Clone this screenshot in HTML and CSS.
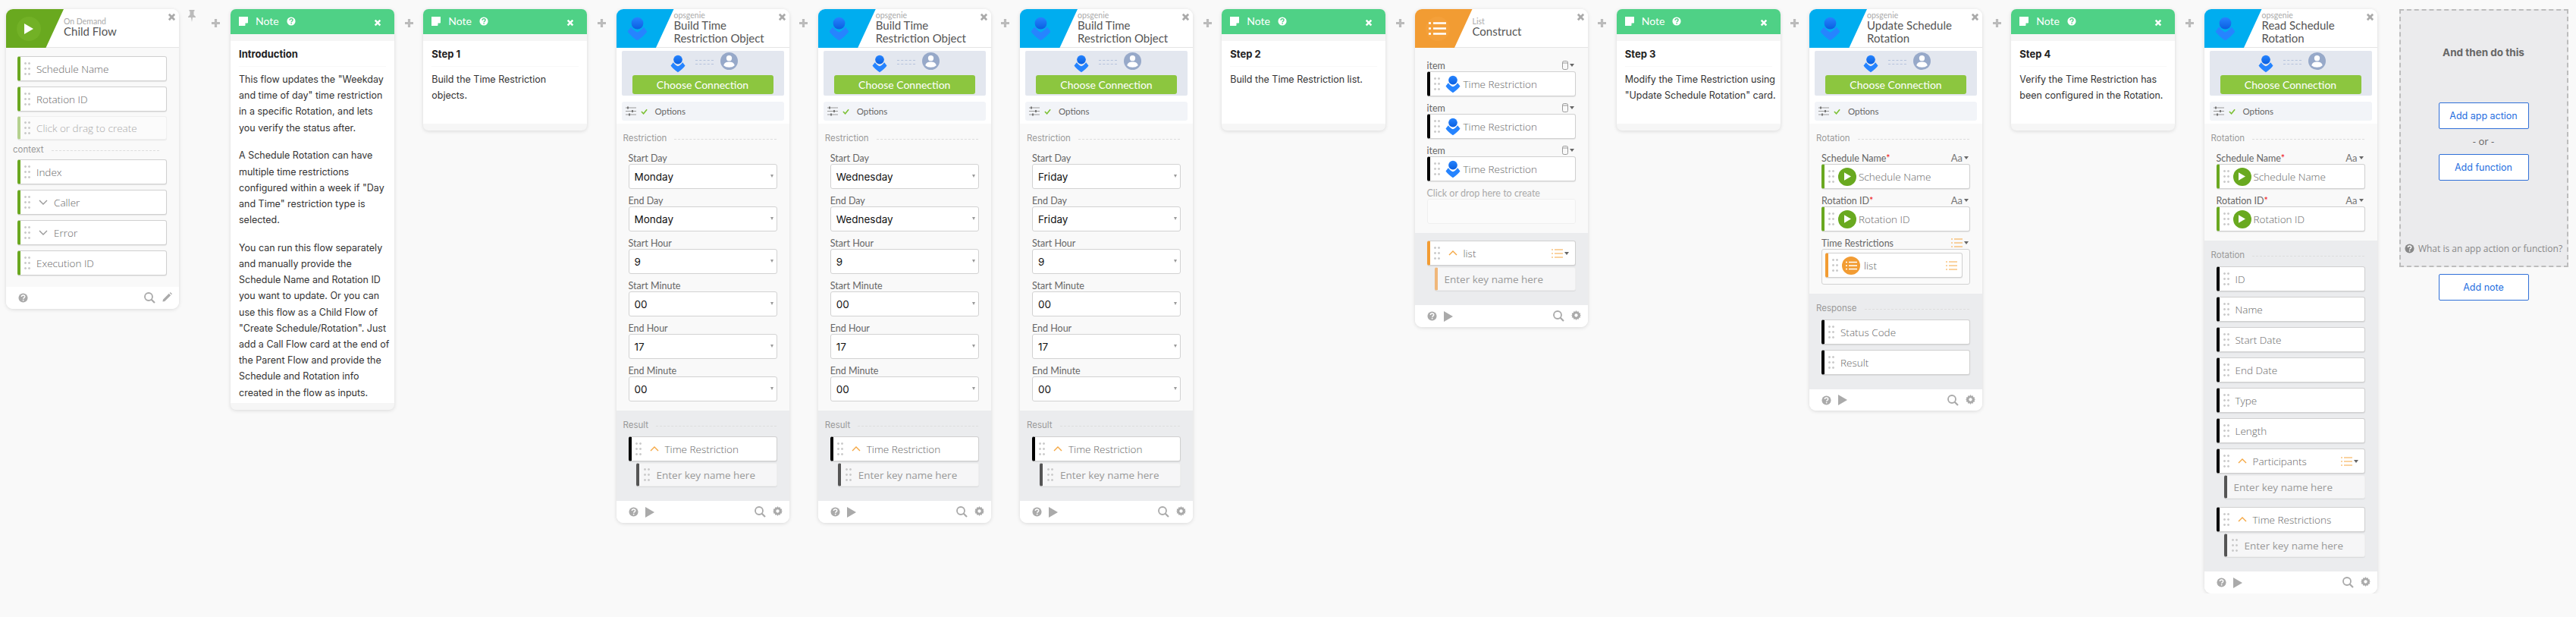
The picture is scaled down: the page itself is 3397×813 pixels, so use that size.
FILE: index.html
```html
<!DOCTYPE html>
<html lang="en">
<head>
    <meta charset="UTF-8">
    <title>Child Flow</title>
    <link rel="stylesheet" href="styles.css">
</head>
<body>

    <!-- shared icons -->
    <svg class="defs" aria-hidden="true">
        <defs>
            <linearGradient id="ogBlue" x1="0" y1="0" x2="0" y2="1">
                <stop offset="0" stop-color="#2684ff"/>
                <stop offset="1" stop-color="#0a5fe0"/>
            </linearGradient>
            <symbol id="i-og" viewBox="0 0 24 28">
                <circle cx="12" cy="7.5" r="7" fill="url(#ogBlue)"/>
                <path d="M12 18c-3-1.400-5.600-3.600-7.400-6.200L.6 17c2.200 3.400 7 7.800 11.400 10.500C16.400 24.800 21.200 20.400 23.400 17l-4-5.200C17.600 14.400 15 16.600 12 18z" fill="#2684ff"/>
            </symbol>
            <symbol id="i-user" viewBox="0 0 24 24">
                <circle cx="12" cy="12" r="12" fill="#97a9c9"/>
                <circle cx="12" cy="8" r="3.800" fill="#fff"/>
                <path d="M4.500 18c.6-3.600 3.600-5 7.500-5s6.900 1.400 7.500 5c-1.800 1.800-4.600 2.600-7.500 2.600s-5.700-.8-7.500-2.600z" fill="#fff"/>
            </symbol>
            <symbol id="i-close" viewBox="0 0 12 12">
                <path d="M2 2l8 8M10 2l-8 8" stroke="currentColor" stroke-width="3" fill="none"/>
            </symbol>
            <symbol id="i-help" viewBox="0 0 14 14">
                <circle cx="7" cy="7" r="6.500" fill="currentColor"/>
                <path d="M4.700 5.400c0-1.400 1-2.200 2.400-2.200s2.300.8 2.300 2c0 1.700-2.200 1.600-2.200 3.200" stroke="#fff" stroke-width="1.600" fill="none"/>
                <rect x="6.300" y="9.500" width="1.700" height="1.700" fill="#fff"/>
            </symbol>
            <symbol id="i-help-dark" viewBox="0 0 14 14">
                <circle cx="7" cy="7" r="6.500" fill="#fff"/>
                <path d="M4.700 5.400c0-1.400 1-2.200 2.400-2.200s2.300.8 2.300 2c0 1.700-2.200 1.600-2.200 3.200" stroke="#4fd186" stroke-width="1.600" fill="none"/>
                <rect x="6.300" y="9.500" width="1.700" height="1.700" fill="#4fd186"/>
            </symbol>
            <symbol id="i-note" viewBox="0 0 12 12">
                <path d="M0 0h12v8l-4 4H0z" fill="#fff"/>
                <path d="M8.500 12V8.500H12" fill="#4fd186"/>
            </symbol>
            <symbol id="i-search" viewBox="0 0 15 15">
                <circle cx="6" cy="6" r="5" fill="none" stroke="currentColor" stroke-width="1.800"/>
                <path d="M9.500 9.500L14 14" stroke="currentColor" stroke-width="2.200"/>
            </symbol>
            <symbol id="i-gear" viewBox="0 0 14 14">
                <path d="M7 0l1.200 2 2.200-.7.500 2.200 2.300.5-.7 2.200L14 7l-1.500.8.700 2.200-2.300.5-.5 2.200-2.200-.7L7 14l-1.200-2-2.200.7-.5-2.200-2.300-.5.700-2.200L0 7l1.500-.8-.7-2.200 2.300-.5.500-2.200 2.200.7z" fill="currentColor"/>
                <circle cx="7" cy="7" r="2.300" fill="#fff"/>
            </symbol>
            <symbol id="i-pencil" viewBox="0 0 14 14">
                <path d="M1 10.500L9.500 2l2.500 2.500L3.500 13 .5 13.500zM10.500 1l1-1 2.500 2.500-1 1z" fill="currentColor"/>
            </symbol>
            <symbol id="i-list" viewBox="0 0 15 12">
                <path d="M0 1h2M4 1h11M0 6h2M4 6h11M0 11h2M4 11h11" stroke="currentColor" stroke-width="1.200" fill="none"/>
            </symbol>
            <symbol id="i-sliders" viewBox="0 0 14 13">
                <path d="M0 2h14M0 6.500h14M0 11h14" stroke="#999" stroke-width="1"/>
                <path d="M3 .5v3M9 5v3M5 9.500v3" stroke="#777" stroke-width="2"/>
            </symbol>
            <symbol id="i-db" viewBox="0 0 8 12">
                <rect x=".5" y=".5" width="7" height="11" rx="2" fill="none" stroke="#999"/>
                <path d="M.5 3h7" stroke="#999"/>
            </symbol>
        </defs>
    </svg>

    <div class="flow">

        <div class="card">
            <div class="head">
                <div class="logo logo-green"><span class="logo-disc"><svg class="ic-play" viewBox="0 0 12 14"><path d="M0 0l12 7-12 7z" fill="#fff"/></svg></span></div>
                <div class="head-text head-text-low"><div class="app">On Demand</div><div class="title">Child Flow</div></div>
                <svg class="close"><use href="#i-close"/></svg>
            </div>
            <div class="sec sec-trigger">
                <div class="row bar-green"><span class="grip"></span><span class="row-text">Schedule Name</span></div>
                <div class="row bar-green"><span class="grip"></span><span class="row-text">Rotation ID</span></div>
                <div class="row row-ghost bar-pale"><span class="grip"></span><span class="row-text">Click or drag to create</span></div>
                <div class="sec-label sec-label-context"><span>context</span><i></i></div>
                <div class="row bar-green"><span class="grip"></span><span class="row-text">Index</span></div>
                <div class="row bar-green"><span class="grip"></span><svg class="chev chev-gray" viewBox="0 0 12 7"><path d="M1 1l5 5 5-5"/></svg><span class="row-text">Caller</span></div>
                <div class="row bar-green"><span class="grip"></span><svg class="chev chev-gray" viewBox="0 0 12 7"><path d="M1 1l5 5 5-5"/></svg><span class="row-text">Error</span></div>
                <div class="row bar-green"><span class="grip"></span><span class="row-text">Execution ID</span></div>
            </div>
            <div class="foot">
                <svg class="ic-help"><use href="#i-help"/></svg>
                <span class="foot-space"></span>
                <svg class="ic-search"><use href="#i-search"/></svg>
                <svg class="ic-gear"><use href="#i-pencil"/></svg>
            </div>
        </div>

        <div class="gap gap-first">
            <svg class="pin" viewBox="0 0 10 16"><path d="M1.500 0h7v1.500L7.500 2v4.500l2.500 2.500v1H6L5 16l-1-6H0V9l2.500-2.500V2l-1-.5z" fill="#bbb"/></svg>
            <svg class="plus" viewBox="0 0 11 11"><path d="M5.500 0v11M0 5.500h11"/></svg>
        </div>

        <div class="note">
            <div class="note-head">
                <svg class="ic-note"><use href="#i-note"/></svg>
                <span class="note-name">Note</span>
                <svg class="ic-note-help"><use href="#i-help-dark"/></svg>
                <svg class="close-white"><use href="#i-close"/></svg>
            </div>
            <div class="note-body">
                <div class="note-title">Introduction</div>
                <div class="note-text">
                    <p>This flow updates the "Weekday<br>and time of day" time restriction<br>in a specific Rotation, and lets<br>you verify the status after.</p>
                    <p>A Schedule Rotation can have<br>multiple time restrictions<br>configured within a week if "Day<br>and Time" restriction type is<br>selected.</p>
                    <p>You can run this flow separately<br>and manually provide the<br>Schedule Name and Rotation ID<br>you want to update. Or you can<br>use this flow as a Child Flow of<br>"Create Schedule/Rotation". Just<br>add a Call Flow card at the end of<br>the Parent Flow and provide the<br>Schedule and Rotation info<br>created in the flow as inputs.</p>
                </div>
            </div>
        </div>

        <div class="gap"><svg class="plus" viewBox="0 0 11 11"><path d="M5.500 0v11M0 5.500h11"/></svg></div>

        <div class="note">
            <div class="note-head">
                <svg class="ic-note"><use href="#i-note"/></svg>
                <span class="note-name">Note</span>
                <svg class="ic-note-help"><use href="#i-help-dark"/></svg>
                <svg class="close-white"><use href="#i-close"/></svg>
            </div>
            <div class="note-body note-body-short">
                <div class="note-title">Step 1</div>
                <div class="note-text"><p>Build the Time Restriction<br>objects.</p></div>
            </div>
        </div>

        <div class="gap"><svg class="plus" viewBox="0 0 11 11"><path d="M5.500 0v11M0 5.500h11"/></svg></div>

        <!-- Build Time Restriction Object: Monday -->
        <div class="card">
            <div class="head">
                <div class="logo logo-blue"><svg class="ic-og-big"><use href="#i-og"/></svg></div>
                <div class="head-text"><div class="app">opsgenie</div><div class="title">Build Time<br>Restriction Object</div></div>
                <svg class="close"><use href="#i-close"/></svg>
            </div>
            <div class="sec-conn">
                <div class="conn">
                    <div class="conn-icons"><svg class="ic-og-small"><use href="#i-og"/></svg><span class="conn-dash"></span><svg class="ic-user"><use href="#i-user"/></svg></div>
                    <div class="choose">Choose Connection</div>
                </div>
                <div class="options"><svg class="ic-sliders"><use href="#i-sliders"/></svg><svg class="ic-check" viewBox="0 0 10 8"><path d="M1 4l3 3 5-6"/></svg><span>Options</span></div>
            </div>
            <div class="sec">
                <div class="sec-label"><span>Restriction</span><i></i></div>
                <div class="field"><label>Start Day</label><div class="select">Monday</div></div>
                <div class="field"><label>End Day</label><div class="select">Monday</div></div>
                <div class="field"><label>Start Hour</label><div class="select">9</div></div>
                <div class="field"><label>Start Minute</label><div class="select">00</div></div>
                <div class="field"><label>End Hour</label><div class="select">17</div></div>
                <div class="field"><label>End Minute</label><div class="select">00</div></div>
            </div>
            <div class="sec sec-out">
                <div class="sec-label"><span>Result</span><i></i></div>
                <div class="row bar-black"><span class="grip"></span><svg class="chev" viewBox="0 0 12 7"><path d="M1 6l5-5 5 5"/></svg><span class="row-text">Time Restriction</span></div>
                <div class="row-sub bar-dark"><span class="grip grip-sub"></span><span class="row-text">Enter key name here</span></div>
            </div>
            <div class="foot">
                <svg class="ic-help"><use href="#i-help"/></svg>
                <svg class="ic-run" viewBox="0 0 12 14"><path d="M0 0l12 7-12 7z"/></svg>
                <span class="foot-space"></span>
                <svg class="ic-search"><use href="#i-search"/></svg>
                <svg class="ic-gear"><use href="#i-gear"/></svg>
            </div>
        </div>

        <div class="gap"><svg class="plus" viewBox="0 0 11 11"><path d="M5.500 0v11M0 5.500h11"/></svg></div>

        <!-- Build Time Restriction Object: Wednesday -->
        <div class="card">
            <div class="head">
                <div class="logo logo-blue"><svg class="ic-og-big"><use href="#i-og"/></svg></div>
                <div class="head-text"><div class="app">opsgenie</div><div class="title">Build Time<br>Restriction Object</div></div>
                <svg class="close"><use href="#i-close"/></svg>
            </div>
            <div class="sec-conn">
                <div class="conn">
                    <div class="conn-icons"><svg class="ic-og-small"><use href="#i-og"/></svg><span class="conn-dash"></span><svg class="ic-user"><use href="#i-user"/></svg></div>
                    <div class="choose">Choose Connection</div>
                </div>
                <div class="options"><svg class="ic-sliders"><use href="#i-sliders"/></svg><svg class="ic-check" viewBox="0 0 10 8"><path d="M1 4l3 3 5-6"/></svg><span>Options</span></div>
            </div>
            <div class="sec">
                <div class="sec-label"><span>Restriction</span><i></i></div>
                <div class="field"><label>Start Day</label><div class="select">Wednesday</div></div>
                <div class="field"><label>End Day</label><div class="select">Wednesday</div></div>
                <div class="field"><label>Start Hour</label><div class="select">9</div></div>
                <div class="field"><label>Start Minute</label><div class="select">00</div></div>
                <div class="field"><label>End Hour</label><div class="select">17</div></div>
                <div class="field"><label>End Minute</label><div class="select">00</div></div>
            </div>
            <div class="sec sec-out">
                <div class="sec-label"><span>Result</span><i></i></div>
                <div class="row bar-black"><span class="grip"></span><svg class="chev" viewBox="0 0 12 7"><path d="M1 6l5-5 5 5"/></svg><span class="row-text">Time Restriction</span></div>
                <div class="row-sub bar-dark"><span class="grip grip-sub"></span><span class="row-text">Enter key name here</span></div>
            </div>
            <div class="foot">
                <svg class="ic-help"><use href="#i-help"/></svg>
                <svg class="ic-run" viewBox="0 0 12 14"><path d="M0 0l12 7-12 7z"/></svg>
                <span class="foot-space"></span>
                <svg class="ic-search"><use href="#i-search"/></svg>
                <svg class="ic-gear"><use href="#i-gear"/></svg>
            </div>
        </div>

        <div class="gap"><svg class="plus" viewBox="0 0 11 11"><path d="M5.500 0v11M0 5.500h11"/></svg></div>

        <!-- Build Time Restriction Object: Friday -->
        <div class="card">
            <div class="head">
                <div class="logo logo-blue"><svg class="ic-og-big"><use href="#i-og"/></svg></div>
                <div class="head-text"><div class="app">opsgenie</div><div class="title">Build Time<br>Restriction Object</div></div>
                <svg class="close"><use href="#i-close"/></svg>
            </div>
            <div class="sec-conn">
                <div class="conn">
                    <div class="conn-icons"><svg class="ic-og-small"><use href="#i-og"/></svg><span class="conn-dash"></span><svg class="ic-user"><use href="#i-user"/></svg></div>
                    <div class="choose">Choose Connection</div>
                </div>
                <div class="options"><svg class="ic-sliders"><use href="#i-sliders"/></svg><svg class="ic-check" viewBox="0 0 10 8"><path d="M1 4l3 3 5-6"/></svg><span>Options</span></div>
            </div>
            <div class="sec">
                <div class="sec-label"><span>Restriction</span><i></i></div>
                <div class="field"><label>Start Day</label><div class="select">Friday</div></div>
                <div class="field"><label>End Day</label><div class="select">Friday</div></div>
                <div class="field"><label>Start Hour</label><div class="select">9</div></div>
                <div class="field"><label>Start Minute</label><div class="select">00</div></div>
                <div class="field"><label>End Hour</label><div class="select">17</div></div>
                <div class="field"><label>End Minute</label><div class="select">00</div></div>
            </div>
            <div class="sec sec-out">
                <div class="sec-label"><span>Result</span><i></i></div>
                <div class="row bar-black"><span class="grip"></span><svg class="chev" viewBox="0 0 12 7"><path d="M1 6l5-5 5 5"/></svg><span class="row-text">Time Restriction</span></div>
                <div class="row-sub bar-dark"><span class="grip grip-sub"></span><span class="row-text">Enter key name here</span></div>
            </div>
            <div class="foot">
                <svg class="ic-help"><use href="#i-help"/></svg>
                <svg class="ic-run" viewBox="0 0 12 14"><path d="M0 0l12 7-12 7z"/></svg>
                <span class="foot-space"></span>
                <svg class="ic-search"><use href="#i-search"/></svg>
                <svg class="ic-gear"><use href="#i-gear"/></svg>
            </div>
        </div>

        <div class="gap"><svg class="plus" viewBox="0 0 11 11"><path d="M5.500 0v11M0 5.500h11"/></svg></div>

        <div class="note">
            <div class="note-head">
                <svg class="ic-note"><use href="#i-note"/></svg>
                <span class="note-name">Note</span>
                <svg class="ic-note-help"><use href="#i-help-dark"/></svg>
                <svg class="close-white"><use href="#i-close"/></svg>
            </div>
            <div class="note-body note-body-short">
                <div class="note-title">Step 2</div>
                <div class="note-text"><p>Build the Time Restriction list.</p></div>
            </div>
        </div>

        <div class="gap"><svg class="plus" viewBox="0 0 11 11"><path d="M5.500 0v11M0 5.500h11"/></svg></div>

        <!-- List Construct -->
        <div class="card">
            <div class="head">
                <div class="logo logo-orange"><span class="logo-disc logo-disc-orange"><svg class="ic-list-white" viewBox="0 0 23 17"><path d="M0 1.500h3M6 1.500h17M0 8.500h3M6 8.500h17M0 15.500h3M6 15.500h17"/></svg></span></div>
                <div class="head-text head-text-low"><div class="app">List</div><div class="title">Construct</div></div>
                <svg class="close"><use href="#i-close"/></svg>
            </div>
            <div class="sec sec-list">
                <div class="field"><label class="label-item">item<svg class="ic-db"><use href="#i-db"/></svg><b class="caret"></b></label>
                    <div class="row bar-black"><span class="grip"></span><svg class="ic-og-row"><use href="#i-og"/></svg><span class="row-text">Time Restriction</span></div></div>
                <div class="field"><label class="label-item">item<svg class="ic-db"><use href="#i-db"/></svg><b class="caret"></b></label>
                    <div class="row bar-black"><span class="grip"></span><svg class="ic-og-row"><use href="#i-og"/></svg><span class="row-text">Time Restriction</span></div></div>
                <div class="field"><label class="label-item">item<svg class="ic-db"><use href="#i-db"/></svg><b class="caret"></b></label>
                    <div class="row bar-black"><span class="grip"></span><svg class="ic-og-row"><use href="#i-og"/></svg><span class="row-text">Time Restriction</span></div></div>
                <div class="field"><label class="label-ghost">Click or drop here to create</label><div class="drop"></div></div>
            </div>
            <div class="sec sec-out sec-out-list">
                <div class="row bar-orange"><span class="grip"></span><svg class="chev" viewBox="0 0 12 7"><path d="M1 6l5-5 5 5"/></svg><span class="row-text">list</span><svg class="ic-list"><use href="#i-list"/></svg><b class="caret"></b></div>
                <div class="row-sub bar-peach"><span class="row-text">Enter key name here</span></div>
            </div>
            <div class="foot">
                <svg class="ic-help"><use href="#i-help"/></svg>
                <svg class="ic-run" viewBox="0 0 12 14"><path d="M0 0l12 7-12 7z"/></svg>
                <span class="foot-space"></span>
                <svg class="ic-search"><use href="#i-search"/></svg>
                <svg class="ic-gear"><use href="#i-gear"/></svg>
            </div>
        </div>

        <div class="gap"><svg class="plus" viewBox="0 0 11 11"><path d="M5.500 0v11M0 5.500h11"/></svg></div>

        <div class="note">
            <div class="note-head">
                <svg class="ic-note"><use href="#i-note"/></svg>
                <span class="note-name">Note</span>
                <svg class="ic-note-help"><use href="#i-help-dark"/></svg>
                <svg class="close-white"><use href="#i-close"/></svg>
            </div>
            <div class="note-body note-body-short">
                <div class="note-title">Step 3</div>
                <div class="note-text"><p>Modify the Time Restriction using<br>"Update Schedule Rotation" card.</p></div>
            </div>
        </div>

        <div class="gap"><svg class="plus" viewBox="0 0 11 11"><path d="M5.500 0v11M0 5.500h11"/></svg></div>

        <!-- Update Schedule Rotation -->
        <div class="card">
            <div class="head">
                <div class="logo logo-blue"><svg class="ic-og-big"><use href="#i-og"/></svg></div>
                <div class="head-text"><div class="app">opsgenie</div><div class="title">Update Schedule<br>Rotation</div></div>
                <svg class="close"><use href="#i-close"/></svg>
            </div>
            <div class="sec-conn">
                <div class="conn">
                    <div class="conn-icons"><svg class="ic-og-small"><use href="#i-og"/></svg><span class="conn-dash"></span><svg class="ic-user"><use href="#i-user"/></svg></div>
                    <div class="choose">Choose Connection</div>
                </div>
                <div class="options"><svg class="ic-sliders"><use href="#i-sliders"/></svg><svg class="ic-check" viewBox="0 0 10 8"><path d="M1 4l3 3 5-6"/></svg><span>Options</span></div>
            </div>
            <div class="sec">
                <div class="sec-label"><span>Rotation</span><i></i></div>
                <div class="field"><label class="label-type"><span>Schedule Name<em>*</em></span><span class="aa">Aa</span><b class="caret"></b></label>
                    <div class="row bar-green"><span class="grip"></span><span class="disc-green"><svg viewBox="0 0 12 14"><path d="M0 0l12 7-12 7z" fill="#fff"/></svg></span><span class="row-text">Schedule Name</span></div></div>
                <div class="field"><label class="label-type"><span>Rotation ID<em>*</em></span><span class="aa">Aa</span><b class="caret"></b></label>
                    <div class="row bar-green"><span class="grip"></span><span class="disc-green"><svg viewBox="0 0 12 14"><path d="M0 0l12 7-12 7z" fill="#fff"/></svg></span><span class="row-text">Rotation ID</span></div></div>
                <div class="field"><label class="label-type"><span>Time Restrictions</span><svg class="ic-list ic-list-label"><use href="#i-list"/></svg><b class="caret"></b></label>
                    <div class="list-box"><div class="row bar-orange"><span class="grip"></span><span class="disc-orange"><svg viewBox="0 0 15 12"><path d="M0 1.500h2M4 1.500h11M0 6h2M4 6h11M0 10.500h2M4 10.500h11"/></svg></span><span class="row-text">list</span><svg class="ic-list"><use href="#i-list"/></svg></div></div></div>
            </div>
            <div class="sec sec-out">
                <div class="sec-label"><span>Response</span><i></i></div>
                <div class="row bar-black"><span class="grip"></span><span class="row-text">Status Code</span></div>
                <div class="row bar-black row-next"><span class="grip"></span><span class="row-text">Result</span></div>
            </div>
            <div class="foot foot-short">
                <svg class="ic-help"><use href="#i-help"/></svg>
                <svg class="ic-run" viewBox="0 0 12 14"><path d="M0 0l12 7-12 7z"/></svg>
                <span class="foot-space"></span>
                <svg class="ic-search"><use href="#i-search"/></svg>
                <svg class="ic-gear"><use href="#i-gear"/></svg>
            </div>
        </div>

        <div class="gap"><svg class="plus" viewBox="0 0 11 11"><path d="M5.500 0v11M0 5.500h11"/></svg></div>

        <div class="note">
            <div class="note-head">
                <svg class="ic-note"><use href="#i-note"/></svg>
                <span class="note-name">Note</span>
                <svg class="ic-note-help"><use href="#i-help-dark"/></svg>
                <svg class="close-white"><use href="#i-close"/></svg>
            </div>
            <div class="note-body note-body-short">
                <div class="note-title">Step 4</div>
                <div class="note-text"><p>Verify the Time Restriction has<br>been configured in the Rotation.</p></div>
            </div>
        </div>

        <div class="gap"><svg class="plus" viewBox="0 0 11 11"><path d="M5.500 0v11M0 5.500h11"/></svg></div>

        <!-- Read Schedule Rotation -->
        <div class="card">
            <div class="head">
                <div class="logo logo-blue"><svg class="ic-og-big"><use href="#i-og"/></svg></div>
                <div class="head-text"><div class="app">opsgenie</div><div class="title">Read Schedule<br>Rotation</div></div>
                <svg class="close"><use href="#i-close"/></svg>
            </div>
            <div class="sec-conn">
                <div class="conn">
                    <div class="conn-icons"><svg class="ic-og-small"><use href="#i-og"/></svg><span class="conn-dash"></span><svg class="ic-user"><use href="#i-user"/></svg></div>
                    <div class="choose">Choose Connection</div>
                </div>
                <div class="options"><svg class="ic-sliders"><use href="#i-sliders"/></svg><svg class="ic-check" viewBox="0 0 10 8"><path d="M1 4l3 3 5-6"/></svg><span>Options</span></div>
            </div>
            <div class="sec">
                <div class="sec-label"><span>Rotation</span><i></i></div>
                <div class="field"><label class="label-type"><span>Schedule Name<em>*</em></span><span class="aa">Aa</span><b class="caret"></b></label>
                    <div class="row bar-green"><span class="grip"></span><span class="disc-green"><svg viewBox="0 0 12 14"><path d="M0 0l12 7-12 7z" fill="#fff"/></svg></span><span class="row-text">Schedule Name</span></div></div>
                <div class="field"><label class="label-type"><span>Rotation ID<em>*</em></span><span class="aa">Aa</span><b class="caret"></b></label>
                    <div class="row bar-green"><span class="grip"></span><span class="disc-green"><svg viewBox="0 0 12 14"><path d="M0 0l12 7-12 7z" fill="#fff"/></svg></span><span class="row-text">Rotation ID</span></div></div>
            </div>
            <div class="sec sec-out">
                <div class="sec-label"><span>Rotation</span><i></i></div>
                <div class="row bar-black"><span class="grip"></span><span class="row-text">ID</span></div>
                <div class="row bar-black row-next"><span class="grip"></span><span class="row-text">Name</span></div>
                <div class="row bar-black row-next"><span class="grip"></span><span class="row-text">Start Date</span></div>
                <div class="row bar-black row-next"><span class="grip"></span><span class="row-text">End Date</span></div>
                <div class="row bar-black row-next"><span class="grip"></span><span class="row-text">Type</span></div>
                <div class="row bar-black row-next"><span class="grip"></span><span class="row-text">Length</span></div>
                <div class="row bar-black row-next"><span class="grip"></span><svg class="chev" viewBox="0 0 12 7"><path d="M1 6l5-5 5 5"/></svg><span class="row-text">Participants</span><svg class="ic-list"><use href="#i-list"/></svg><b class="caret"></b></div>
                <div class="row-sub bar-dark"><span class="row-text">Enter key name here</span></div>
                <div class="row bar-black row-after-sub"><span class="grip"></span><svg class="chev" viewBox="0 0 12 7"><path d="M1 6l5-5 5 5"/></svg><span class="row-text">Time Restrictions</span></div>
                <div class="row-sub bar-dark"><span class="grip grip-sub"></span><span class="row-text">Enter key name here</span></div>
            </div>
            <div class="foot">
                <svg class="ic-help"><use href="#i-help"/></svg>
                <svg class="ic-run" viewBox="0 0 12 14"><path d="M0 0l12 7-12 7z"/></svg>
                <span class="foot-space"></span>
                <svg class="ic-search"><use href="#i-search"/></svg>
                <svg class="ic-gear"><use href="#i-gear"/></svg>
            </div>
        </div>

        <div class="next">
            <div class="next-box">
                <div class="next-title">And then do this</div>
                <div class="btn">Add app action</div>
                <div class="next-or">- or -</div>
                <div class="btn">Add function</div>
                <div class="next-help"><svg class="ic-help-big"><use href="#i-help"/></svg><span>What is an app action or function?</span></div>
            </div>
            <div class="btn">Add note</div>
        </div>

    </div>

</body>
</html>
```

FILE: styles.css
```css
* {
    box-sizing: border-box;
}

body {
    margin: 0;
    background-color: #f9f9f9;
    font-family: "Open Sans", sans-serif;
    color: #666;
    overflow: hidden;
}

.defs {
    display: block;
    width: 0;
    height: 0;
}

.flow {
    display: flex;
    align-items: flex-start;
    padding: 12px 0 0 8px;
}

.gap {
    flex: none;
    width: 38.25px;
    height: 40px;
    display: flex;
    padding-top: 13px;
    justify-content: center;
}

.gap-first {
    width: 68px;
    justify-content: flex-end;
    padding-right: 14px;
}

.plus {
    width: 11px;
    height: 11px;
    fill: none;
    stroke: #bbb;
    stroke-width: 3.2;
}

.pin {
    width: 10px;
    height: 16px;
    margin: -12px 21px 0 0;
}

/* cards */
.card {
    flex: none;
    width: 228px;
    position: relative;
    background: #fff;
    border-radius: 9px;
    overflow: hidden;
    box-shadow: 0 1px 5px rgba(0, 0, 0, .13);
}

.head {
    display: flex;
    height: 51px;
    background: #fff;
    border-bottom: 1px solid #e4e4e4;
}

.logo {
    flex: none;
    width: 76px;
    height: 51px;
    display: flex;
    align-items: center;
    padding-left: 14px;
    clip-path: polygon(0 0, 100% 0, 69% 100%, 0 100%);
}

.logo-green {
    background: #69a91f;
}

.logo-blue {
    background: #00adef;
}

.logo-orange {
    background: #f29c33;
}

.logo-disc {
    width: 32px;
    height: 32px;
    border-radius: 50%;
    background: #72b126;
    display: flex;
    align-items: center;
    justify-content: center;
}

.logo-disc-orange {
    background: #f4a03a;
}

.ic-play {
    width: 12px;
    height: 14px;
}

.ic-list-white {
    width: 23px;
    height: 17px;
    fill: none;
    stroke: #fff;
    stroke-width: 2.4;
}

.ic-og-big {
    width: 27px;
    height: 32px;
}

.head-text {
    padding-top: 3px;
    min-width: 0;
}

.head-text-low {
    padding-top: 11px;
}

.app {
    font-family: Lato, sans-serif;
    font-size: 10.5px;
    line-height: 10px;
    color: #aaa;
}

.title {
    font-family: Lato, sans-serif;
    font-size: 15px;
    line-height: 17px;
    color: #555;
    white-space: nowrap;
}

.close {
    width: 11px;
    height: 11px;
    color: #aaa;
    position: absolute;
    top: 5px;
    right: 4px;
}

/* connection block */
.sec-conn {
    background: #fff;
    padding: 4px 7px 4px;
    height: 100px;
}

.conn {
    height: 59px;
    background: #e3e7ef;
    border-radius: 2px;
}

.conn-icons {
    height: 32px;
    display: flex;
    align-items: center;
    padding: 0 0 3px 64px;
}

.ic-og-small {
    width: 20px;
    height: 24px;
    margin-top: 4px;
}

.conn-dash {
    width: 24px;
    height: 6px;
    margin: 0 9px 0 13px;
    border-top: 1px dashed #b5c3dc;
    border-bottom: 1px dashed #b5c3dc;
}

.ic-user {
    width: 23px;
    height: 23px;
    margin-top: -2px;
}

.choose {
    width: 186px;
    height: 25px;
    margin: 0 auto;
    background: #8cc63f;
    border-radius: 3px;
    color: #fff;
    font-family: Lato, sans-serif;
    font-size: 14px;
    line-height: 25px;
    text-align: center;
}

.options {
    height: 25px;
    margin-top: 8px;
    background: #f2f4f8;
    border-radius: 3px;
    display: flex;
    align-items: center;
    padding-left: 5px;
    font-family: Lato, sans-serif;
    font-size: 11.5px;
    color: #666;
}

.ic-sliders {
    width: 14px;
    height: 13px;
}

.ic-check {
    width: 9px;
    height: 8px;
    margin: 0 10px 0 6px;
    fill: none;
    stroke: #7cc034;
    stroke-width: 1.800;
}

/* sections */
.sec {
    background: #f9f9f9;
    padding: 11px 16px 12px;
}

.sec-trigger {
    padding: 11px 16px 15px 15px;
}

.sec-out {
    background: #ebecee;
    padding-bottom: 19px;
}

.sec-out-list {
    padding-top: 10px;
}

.sec-list {
    padding-top: 15px;
}

.sec-label {
    display: flex;
    align-items: center;
    margin-left: -7px;
    height: 16px;
    font-size: 11.5px;
    color: #999;
    font-family: Inter, sans-serif;
}

.sec-label span {
    margin-right: 10px;
}

.sec-label i {
    flex: 1;
    margin-top: 3px;
    margin-right: 1px;
    border-top: 1px dashed #ddd;
}

.sec-label + .row {
    margin-top: 7px;
}

.sec-label-context {
    margin: 2px 9px 0 -6px;
    height: 22px;
    line-height: 22px;
}

.sec-label-context + .row {
    margin-top: 2px;
}

.field {
    margin-top: 7px;
}

.sec-label + .field {
    margin-top: 10px;
}

.sec-list .field:first-child {
    margin-top: 0;
}

.field label {
    display: flex;
    align-items: center;
    height: 16px;
    font-family: Lato, sans-serif;
    font-size: 12.5px;
    color: #666;
}

.field label em {
    color: #e11;
    font-style: normal;
}

.label-type span:first-child,
.label-item {
    flex: 1;
}

.label-ghost {
    color: #aaa !important;
}

.aa {
    font-size: 13px;
    color: #777;
    margin-left: auto;
}

.ic-db {
    width: 8px;
    height: 12px;
    margin-left: auto;
}

.caret {
    width: 0;
    height: 0;
    margin: 0 2px 0 2px;
    border: 3px solid transparent;
    border-top: 4px solid #666;
    border-bottom: 0;
}

.select {
    height: 33px;
    position: relative;
    background: #fff;
    border: 1px solid #d2d2d2;
    border-radius: 3px;
    padding-left: 7px;
    font-family: Inter, sans-serif;
    font-size: 13.5px;
    line-height: 33px;
    color: #111;
}

.select::after {
    content: "";
    position: absolute;
    top: 13px;
    right: 4px;
    border: 2.5px solid transparent;
    border-top: 4px solid #999;
    border-bottom: 0;
}

/* pills */
.row,
.row-sub {
    display: flex;
    align-items: center;
    background: #fff;
    border: 1px solid #d0d0d0;
    border-left-width: 4px;
    border-radius: 3px;
    height: 33px;
    box-shadow: 0 1px 1px rgba(0, 0, 0, .08);
    padding-right: 6px;
}

.row + .row {
    margin-top: 7px;
}

.row-sub {
    height: 31px;
    margin: 2px 0 0 10px;
    background: #f6f6f7;
    border-color: #eee;
    padding-left: 9px;
}

.row-after-sub {
    margin-top: 11px;
}

.row-ghost {
    height: 31px;
    margin-top: 6px !important;
    background: #fbfbfb;
    border-color: #f0f0f0;
}

.row-ghost .row-text {
    color: #aaa;
}

.bar-green {
    border-left-color: #6aa820;
}

.bar-pale {
    border-left-color: #b5d18f;
}

.bar-black {
    border-left-color: #000;
}

.bar-dark {
    border-left-color: #555;
}

.bar-orange {
    border-left-color: #f29c33;
}

.bar-peach {
    border-left-color: #f0b77a;
}

.grip {
    flex: none;
    width: 10px;
    height: 21px;
    margin: 0 7px 0 4px;
    background-image: radial-gradient(circle, #ccc 1.2px, transparent 1.6px);
    background-size: 5px 7px;
}

.grip-sub {
    margin-left: -4px;
    margin-right: 8px;
}

.row-text {
    font-size: 13.5px;
    font-weight: 300;
    color: #666;
    white-space: nowrap;
}

.row-sub .row-text {
    color: #999;
    font-weight: 400;
}

.chev {
    flex: none;
    width: 12px;
    height: 7px;
    margin: 0 8px 0 3px;
    fill: none;
    stroke: #f5a742;
    stroke-width: 1.400;
}

.chev-gray {
    stroke: #999;
}

.ic-list {
    flex: none;
    width: 15px;
    height: 12px;
    margin-left: auto;
    color: #f5a742;
}

.ic-og-row {
    flex: none;
    width: 20px;
    height: 24px;
    margin: 0 4px 0 -1px;
}

.disc-green,
.disc-orange {
    flex: none;
    width: 24px;
    height: 24px;
    margin: 0 3px 0 -3px;
    border-radius: 50%;
    background: #69a91f;
    display: flex;
    align-items: center;
    justify-content: center;
}

.disc-green svg {
    width: 9px;
    height: 11px;
}

.disc-orange {
    background: #f29c33;
    margin-right: 5px;
}

.disc-orange svg {
    width: 15px;
    height: 12px;
    fill: none;
    stroke: #fff;
    stroke-width: 1.500;
}

.list-box {
    height: 47px;
    border: 1px solid #d2d2d2;
    border-radius: 3px;
    padding: 4px 9px 0 4px;
    background: #fbfbfb;
}

.drop {
    height: 33px;
    background: #fbfbfb;
    border: 1px solid #f0f0f0;
    border-radius: 3px;
}

.foot {
    height: 29px;
    background: #fff;
    display: flex;
    align-items: center;
    padding: 0 9px 0 16px;
    color: #aaa;
}

.foot-short {
    height: 28px;
}

.foot-space {
    flex: 1;
}

.ic-help {
    width: 13px;
    height: 13px;
}

.ic-run {
    width: 12px;
    height: 14px;
    margin-left: 9px;
    fill: #aaa;
}

.ic-search {
    width: 15px;
    height: 15px;
}

.ic-gear {
    width: 13px;
    height: 13px;
    margin: -2px 0 0 9px;
}

/* notes */
.note {
    flex: none;
    width: 216px;
    background: #f6f6f6;
    border-radius: 7px;
    overflow: hidden;
    box-shadow: 0 1px 5px rgba(0, 0, 0, .13);
}

.note-head {
    height: 33px;
    background: #4fd186;
    display: flex;
    align-items: center;
    padding: 0 17px 2px 11px;
    color: #fff;
}

.ic-note {
    width: 12px;
    height: 12px;
}

.note-name {
    margin-left: 10px;
    font-family: Lato, sans-serif;
    font-size: 14px;
}

.ic-note-help {
    width: 12px;
    height: 12px;
    margin-left: 10px;
}

.close-white {
    width: 10px;
    height: 10px;
    margin: 4px 0 0 auto;
    color: #fff;
}

.note-body {
    margin: 9px 0;
    background: #fff;
    padding: 0 11px 0;
}

.note-body-short {
    height: 109px;
}

.note-title {
    height: 34px;
    font-family: Inter, sans-serif;
    font-size: 13px;
    font-weight: 700;
    line-height: 35px;
    color: #222;
    border-bottom: 1px solid #f8f8f8;
}

.note-text {
    padding: 6px 0 3px;
    font-family: Inter, sans-serif;
    font-size: 12.5px;
    line-height: 21.2px;
    color: #333;
    white-space: nowrap;
}

.note-text p {
    margin: 0 0 15.500px;
}

.note-text p:last-child {
    margin: 0;
}

/* add step panel */
.next {
    flex: none;
    width: 223px;
    margin-left: 29px;
    display: flex;
    flex-direction: column;
    align-items: center;
}

.next-box {
    width: 100%;
    height: 340px;
    background: #ebebed;
    border: 2px dashed #bdbdbd;
    display: flex;
    flex-direction: column;
    align-items: center;
    margin-bottom: 9px;
}

.next-title {
    margin: 45px 0 56px;
    font-family: Inter, sans-serif;
    font-size: 13.5px;
    font-weight: 700;
    line-height: 20px;
    color: #666;
}

.btn {
    width: 119px;
    height: 35px;
    background: #fff;
    border: 1px solid #2f6fd8;
    border-radius: 2px;
    color: #1f6ee0;
    font-family: Inter, sans-serif;
    font-size: 12.5px;
    line-height: 33px;
    text-align: center;
}

.next-or {
    height: 33px;
    line-height: 33px;
    font-size: 13px;
    color: #666;
}

.next-help {
    margin-top: auto;
    margin-bottom: 14px;
    display: flex;
    align-items: center;
    font-size: 12px;
    color: #888;
    white-space: nowrap;
}

.ic-help-big {
    width: 13px;
    height: 13px;
    margin-right: 5px;
    color: #888;
}
```
